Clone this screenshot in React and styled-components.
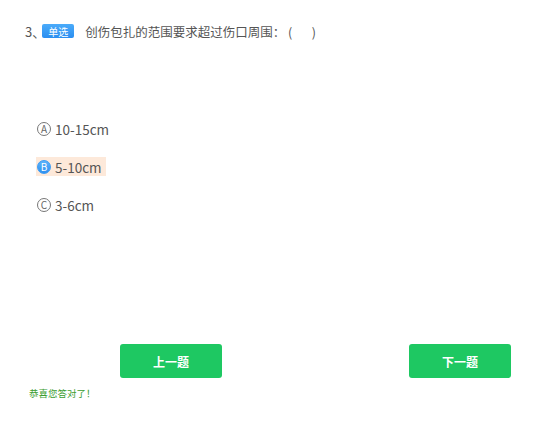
import React from "react";
import styled, { createGlobalStyle } from "styled-components";

const GlobalStyle = createGlobalStyle`
  html, body {
    margin: 0;
    padding: 0;
    background: #fff;
    font-family: "Noto Sans CJK SC", "Noto Sans", sans-serif;
  }
`;

const Page = styled.div`
  width: 557px;
  height: 428px;
  box-sizing: border-box;
  padding: 21px 0 0 0;
  display: flex;
  flex-direction: column;
`;

const Title = styled.div`
  display: flex;
  align-items: center;
  padding-left: 25px;
  height: 20px;
  font-size: 12.5px;
  color: #555;
  white-space: pre;
`;

const Num = styled.span`
  font-size: 13px;
  color: #555;
  margin-right: -3px;
`;

const Badge = styled.span`
  display: inline-flex;
  align-items: center;
  justify-content: center;
  width: 32px;
  height: 14px;
  border-radius: 2px;
  background: linear-gradient(#4aabfa, #2b8ef0);
  color: #fff;
  font-size: 10px;
  margin-right: 11px;
`;

const Options = styled.div`
  display: flex;
  flex-direction: column;
  gap: 19px;
  padding: 78px 0 0 36px;
`;

const Option = styled.div`
  display: inline-flex;
  align-self: flex-start;
  align-items: center;
  height: 19px;
  padding: 0 4px 0 1px;
  gap: 4px;
  font-size: 13.5px;
  color: #555;
  background: ${(p) => (p.$active ? "#fde9da" : "transparent")};
`;

const Letter = styled.span`
  width: 14px;
  height: 14px;
  border-radius: 50%;
  box-sizing: border-box;
  display: inline-flex;
  align-items: center;
  justify-content: center;
  font-size: 10px;
  line-height: 1;
  color: ${(p) => (p.$active ? "#fff" : "#666")};
  border: 1px solid ${(p) => (p.$active ? "#3c9cf5" : "#777")};
  background: ${(p) => (p.$active ? "linear-gradient(#5db4fa, #2f90f0)" : "#fff")};
`;

const Buttons = styled.div`
  display: flex;
  justify-content: space-between;
  padding: 0 46px 0 120px;
  margin-top: 130px;
`;

const Button = styled.button`
  width: 102px;
  height: 34px;
  border: none;
  border-radius: 3px;
  background: #1ec862;
  color: #fff;
  font-family: inherit;
  font-size: 12px;
  font-weight: bold;
  cursor: pointer;
`;

const Success = styled.div`
  padding-left: 29px;
  margin-top: 8px;
  font-size: 9.5px;
  color: #3a9d2f;
`;

const options = [
  { key: "A", text: "10-15cm" },
  { key: "B", text: "5-10cm", active: true },
  { key: "C", text: "3-6cm" },
];

export default function App() {
  return (
    <Page>
      <GlobalStyle />
      <Title>
        <Num>3、</Num>
        <Badge>单选</Badge>
        {"创伤包扎的范围要求超过伤口周围： (       )"}
      </Title>
      <Options>
        {options.map((o) => (
          <Option key={o.key} $active={o.active}>
            <Letter $active={o.active}>{o.key}</Letter>
            {o.text}
          </Option>
        ))}
      </Options>
      <Buttons>
        <Button>上一题</Button>
        <Button>下一题</Button>
      </Buttons>
      <Success>恭喜您答对了！</Success>
    </Page>
  );
}
